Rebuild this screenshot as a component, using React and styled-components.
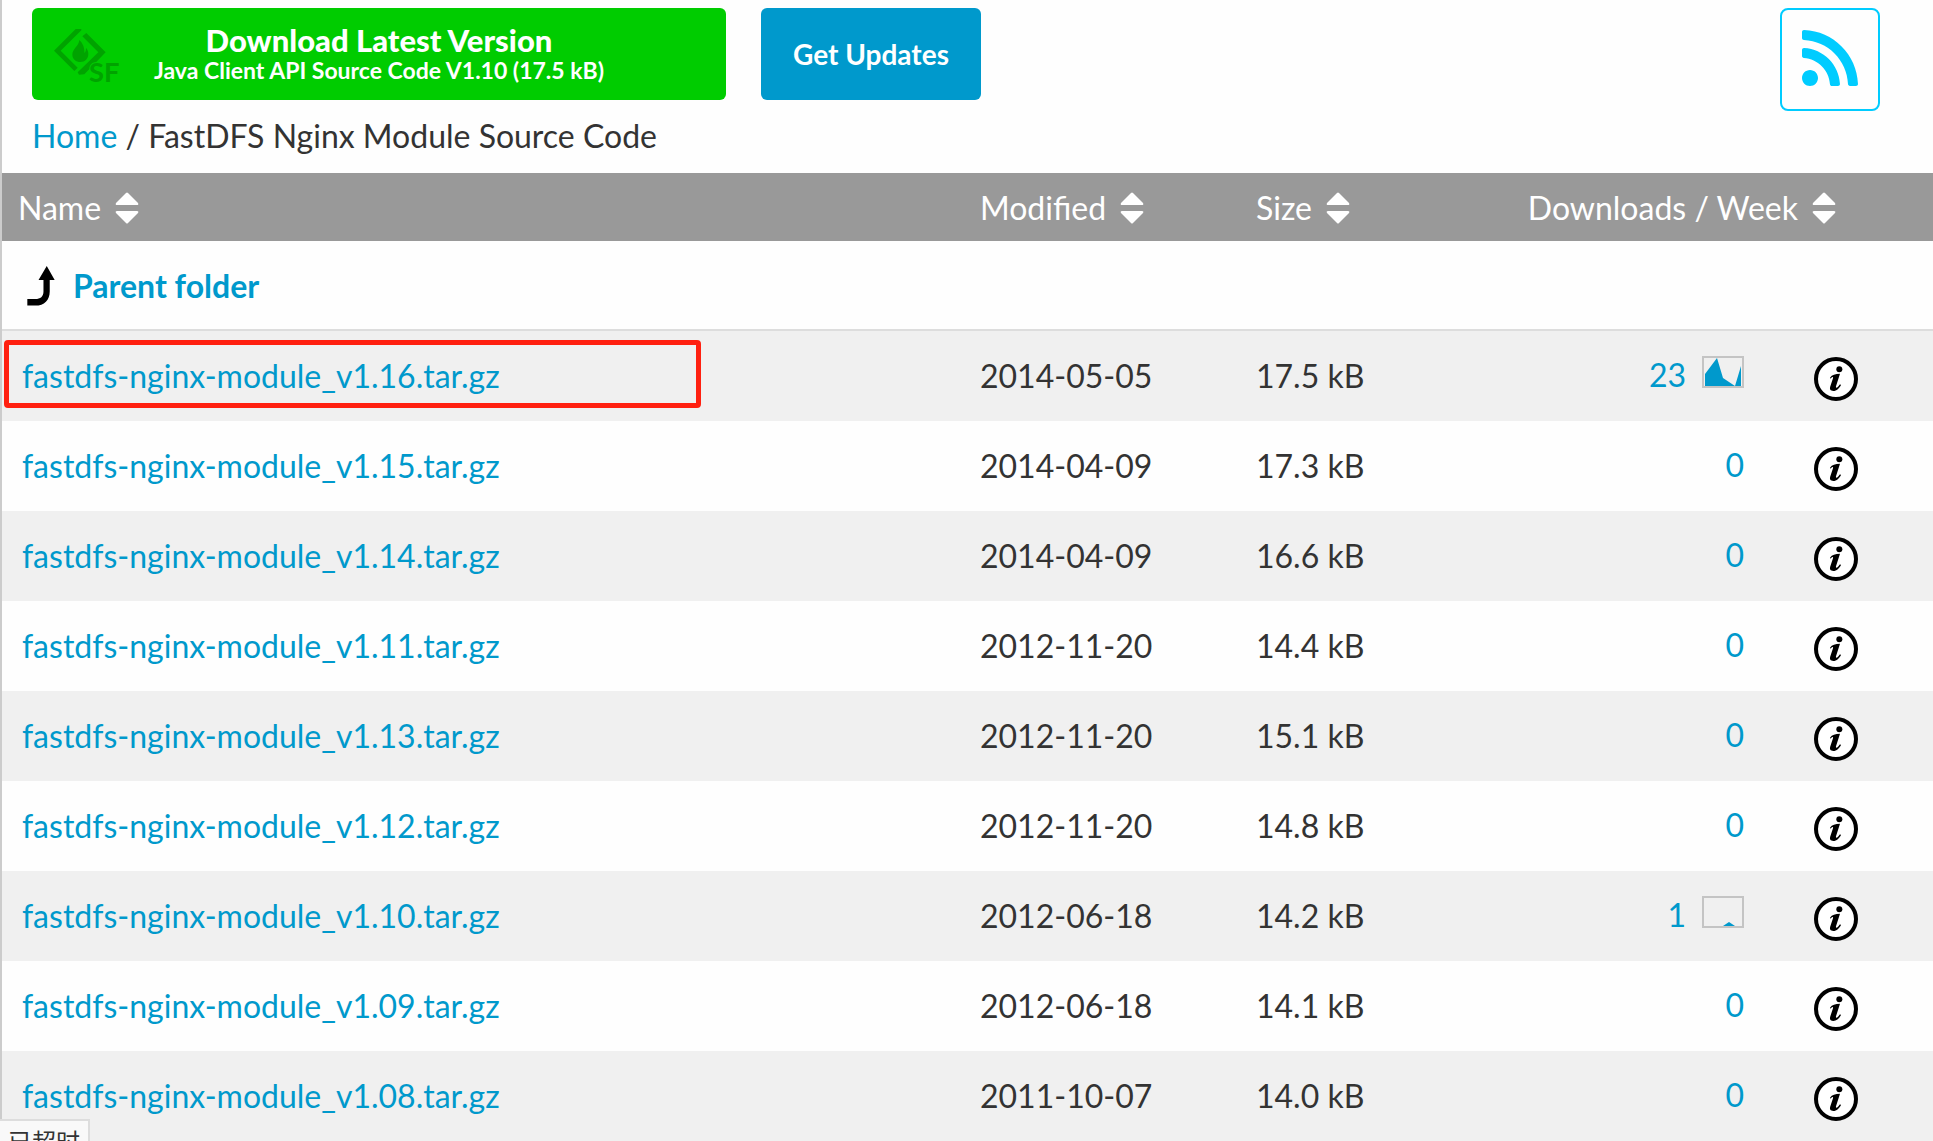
import styled, { createGlobalStyle } from "styled-components";
import { FaRss } from "react-icons/fa";

const files = [
  { version: "1.16", modified: "2014-05-05", size: "17.5 kB", downloads: 23, trend: "0,28 0,16 12,0 18,20 30,28 36,8 36,28", marked: true },
  { version: "1.15", modified: "2014-04-09", size: "17.3 kB", downloads: 0 },
  { version: "1.14", modified: "2014-04-09", size: "16.6 kB", downloads: 0 },
  { version: "1.11", modified: "2012-11-20", size: "14.4 kB", downloads: 0 },
  { version: "1.13", modified: "2012-11-20", size: "15.1 kB", downloads: 0 },
  { version: "1.12", modified: "2012-11-20", size: "14.8 kB", downloads: 0 },
  { version: "1.10", modified: "2012-06-18", size: "14.2 kB", downloads: 1, trend: "18,28 24,24 30,28" },
  { version: "1.09", modified: "2012-06-18", size: "14.1 kB", downloads: 0 },
  { version: "1.08", modified: "2011-10-07", size: "14.0 kB", downloads: 0 },
];

const SourceForgeMark = () => (
  <Mark viewBox="42 27 192 162" aria-hidden="true">
    <path d="M124 27H107L42 92L103 153L113 143L62 92L124 31Z" />
    <path d="M127 49L139 39L197 97L133 163L117 164L113 157L175 97Z" />
    <path d="M118 60C117 78 97 86 97 104C97 117 108 126 121 126C135 126 145 116 145 102C145 94 142 88 138 84C138 92 136 97 133 99C135 86 128 68 118 60Z" />
    <text x="147" y="187">
      SF
    </text>
  </Mark>
);

const SortLabel = ({ children }) => (
  <SortButton type="button">
    {children}
    <svg width="24" height="32" viewBox="0 0 24 32" aria-hidden="true">
      <path d="M11 1Q12 0 13 1L23 11Q24 13 22 13H2Q0 13 1 11Z" />
      <path d="M11 31Q12 32 13 31L23 21Q24 19 22 19H2Q0 19 1 21Z" />
    </svg>
  </SortButton>
);

const InfoIcon = () => (
  <svg width="44" height="44" viewBox="0 0 132 132" aria-hidden="true">
    <circle cx="66" cy="66" r="60" fill="#fff" stroke="#000" strokeWidth="12" />
    <circle cx="76" cy="37" r="9" />
    <path d="M48 62C54 53 64 50 78 50L66 88C65 93 68 93 72 89L78 82L81 84C76 94 68 102 58 102C49 102 46 97 49 88L57 64C58 59 55 59 50 65Z" />
  </svg>
);

const FileRow = ({ file }) => {
  const name = `fastdfs-nginx-module_v${file.version}.tar.gz`;
  return (
    <Row>
      <NameCell scope="row">
        <Link href="#download">{name}</Link>
        {file.marked && <Marker />}
      </NameCell>
      <Cell>{file.modified}</Cell>
      <Cell>{file.size}</Cell>
      <CountCell>
        <Count href="#stats">
          {file.downloads}
          {file.trend && (
            <Trend viewBox="0 0 36 28" aria-hidden="true">
              <polygon points={file.trend} />
            </Trend>
          )}
        </Count>
      </CountCell>
      <InfoCell>
        <InfoButton type="button" aria-label={`Details of ${name}`}>
          <InfoIcon />
        </InfoButton>
      </InfoCell>
    </Row>
  );
};

const App = () => {
  return (
    <Page>
      <GlobalStyle />
      <TopBar>
        <div>
          <Actions>
            <DownloadLink href="#latest">
              <SourceForgeMark />
              <strong>Download Latest Version</strong>
              <span>Java Client API Source Code V1.10 (17.5 kB)</span>
            </DownloadLink>
            <UpdatesButton type="button">Get Updates</UpdatesButton>
          </Actions>
          <Breadcrumb aria-label="Breadcrumb">
            <Link href="#home">Home</Link> / FastDFS Nginx Module Source Code
          </Breadcrumb>
        </div>
        <RssLink href="#rss" aria-label="RSS feed">
          <FaRss />
        </RssLink>
      </TopBar>
      <FileTable>
        <colgroup>
          <col />
          <col width="276" />
          <col width="200" />
          <col width="308" />
          <col width="179" />
        </colgroup>
        <thead>
          <tr>
            <HeadCell $first>
              <SortLabel>Name</SortLabel>
            </HeadCell>
            <HeadCell>
              <SortLabel>Modified</SortLabel>
            </HeadCell>
            <HeadCell>
              <SortLabel>Size</SortLabel>
            </HeadCell>
            <HeadCell $last colSpan={2}>
              <SortLabel>Downloads / Week</SortLabel>
            </HeadCell>
          </tr>
        </thead>
        <tbody>
          <tr>
            <ParentCell colSpan={5}>
              <ParentLink href="#parent">
                <svg width="28" height="40" viewBox="37 45 85 121" aria-hidden="true">
                  <path d="M97 45L121 87H106V122C106 148 90 165 62 165H38V145H62C78 145 87 137 87 122V87H72Z" />
                </svg>
                Parent folder
              </ParentLink>
            </ParentCell>
          </tr>
          {files.map((file) => (
            <FileRow key={file.version} file={file} />
          ))}
        </tbody>
      </FileTable>
      <StatusBubble role="status">已超时</StatusBubble>
    </Page>
  );
};

const GlobalStyle = createGlobalStyle`
  * {
    box-sizing: border-box;
  }
  body {
    margin: 0;
    background: #fefefe;
    color: #333;
    font-family: Lato, "Noto Sans CJK SC", sans-serif;
    font-size: 32px;
    line-height: 40px;
  }
  button {
    padding: 0;
    border: 0;
    background: none;
    color: inherit;
    font: inherit;
    cursor: pointer;
  }
`;

const Page = styled.main`
  min-height: 100vh;
  border-left: 2px solid #ccc;
`;

const TopBar = styled.header`
  display: flex;
  justify-content: space-between;
  align-items: flex-start;
  padding: 8px 53px 17px 30px;
`;

const Actions = styled.div`
  display: flex;
  gap: 35px;
`;

const DownloadLink = styled.a`
  position: relative;
  display: flex;
  flex-direction: column;
  align-items: center;
  justify-content: center;
  width: 694px;
  height: 92px;
  border-radius: 6px;
  background: #0c0;
  color: #fff;
  font-weight: 700;
  text-decoration: none;
  strong {
    font-size: 31px;
    line-height: 32px;
  }
  span {
    font-size: 23px;
    line-height: 28px;
  }
`;

const Mark = styled.svg`
  position: absolute;
  left: 22px;
  top: 21px;
  width: 64px;
  height: 54px;
  overflow: visible;
  fill: #00a300;
  text {
    font-size: 82px;
    font-weight: 700;
    stroke: #0c0;
    stroke-width: 6px;
    paint-order: stroke;
  }
`;

const UpdatesButton = styled.button`
  && {
    width: 220px;
    height: 92px;
    border-radius: 6px;
    background: #09c;
    color: #fff;
    font-size: 28px;
    font-weight: 700;
  }
`;

const Breadcrumb = styled.nav`
  padding-top: 16px;
`;

const RssLink = styled.a`
  display: flex;
  align-items: center;
  justify-content: center;
  width: 100px;
  height: 103px;
  padding-bottom: 4px;
  border: 2px solid #0cf;
  border-radius: 8px;
  color: #0cf;
  svg {
    width: 56px;
    height: 64px;
  }
`;

const Link = styled.a`
  color: #09c;
  text-decoration: none;
`;

const FileTable = styled.table`
  width: 100%;
  table-layout: fixed;
  border-collapse: separate;
  border-spacing: 0;
`;

const HeadCell = styled.th`
  height: 68px;
  padding: 0 ${({ $last }) => ($last ? 97 : 10)}px 2px ${({ $first }) => ($first ? 16 : 10)}px;
  background: #999;
  color: #fff;
  font-weight: 400;
  text-align: ${({ $last }) => ($last ? "right" : "left")};
`;

const SortButton = styled.button`
  display: inline-flex;
  align-items: center;
  gap: 14px;
  vertical-align: middle;
  svg {
    fill: #fff;
  }
`;

const Cell = styled.td`
  height: 90px;
  padding: 0 10px;
`;

const NameCell = styled.th`
  position: relative;
  padding: 0 20px;
  font-weight: 400;
  text-align: left;
`;

const ParentCell = styled.td`
  height: 90px;
  padding: 2px 25px 0;
  border-bottom: 2px solid #ddd;
`;

const ParentLink = styled(Link)`
  display: flex;
  align-items: center;
  gap: 18px;
  font-weight: 700;
  svg {
    fill: #000;
  }
`;

const Row = styled.tr`
  &:nth-child(even) {
    background: #f0f0f0;
  }
`;

const CountCell = styled(Cell)`
  padding: 0 10px 2px;
  text-align: right;
`;

const Count = styled(Link)`
  display: flex;
  align-items: center;
  justify-content: flex-end;
  gap: 16px;
`;

const Trend = styled.svg`
  width: 42px;
  height: 32px;
  padding: 0 1px;
  margin-bottom: 6px;
  border: 2px solid #c4c4c4;
  fill: #09c;
`;

const InfoCell = styled(Cell)`
  padding: 6px 0 0 60px;
`;

const InfoButton = styled.button`
  && {
    display: block;
    height: 44px;
  }
`;

const Marker = styled.span`
  position: absolute;
  top: 9px;
  left: 2px;
  width: 72%;
  height: 68px;
  border: 5px solid #ff2010;
  border-radius: 4px;
  pointer-events: none;
`;

const StatusBubble = styled.div`
  position: fixed;
  left: 0;
  bottom: 0;
  height: 22px;
  padding: 0 8px;
  overflow: hidden;
  border: 2px solid #ddd;
  border-width: 2px 2px 0 0;
  background: #f9f9f9;
  font-family: "Noto Sans CJK SC", sans-serif;
  font-size: 24px;
  line-height: 40px;
`;

export default App;
